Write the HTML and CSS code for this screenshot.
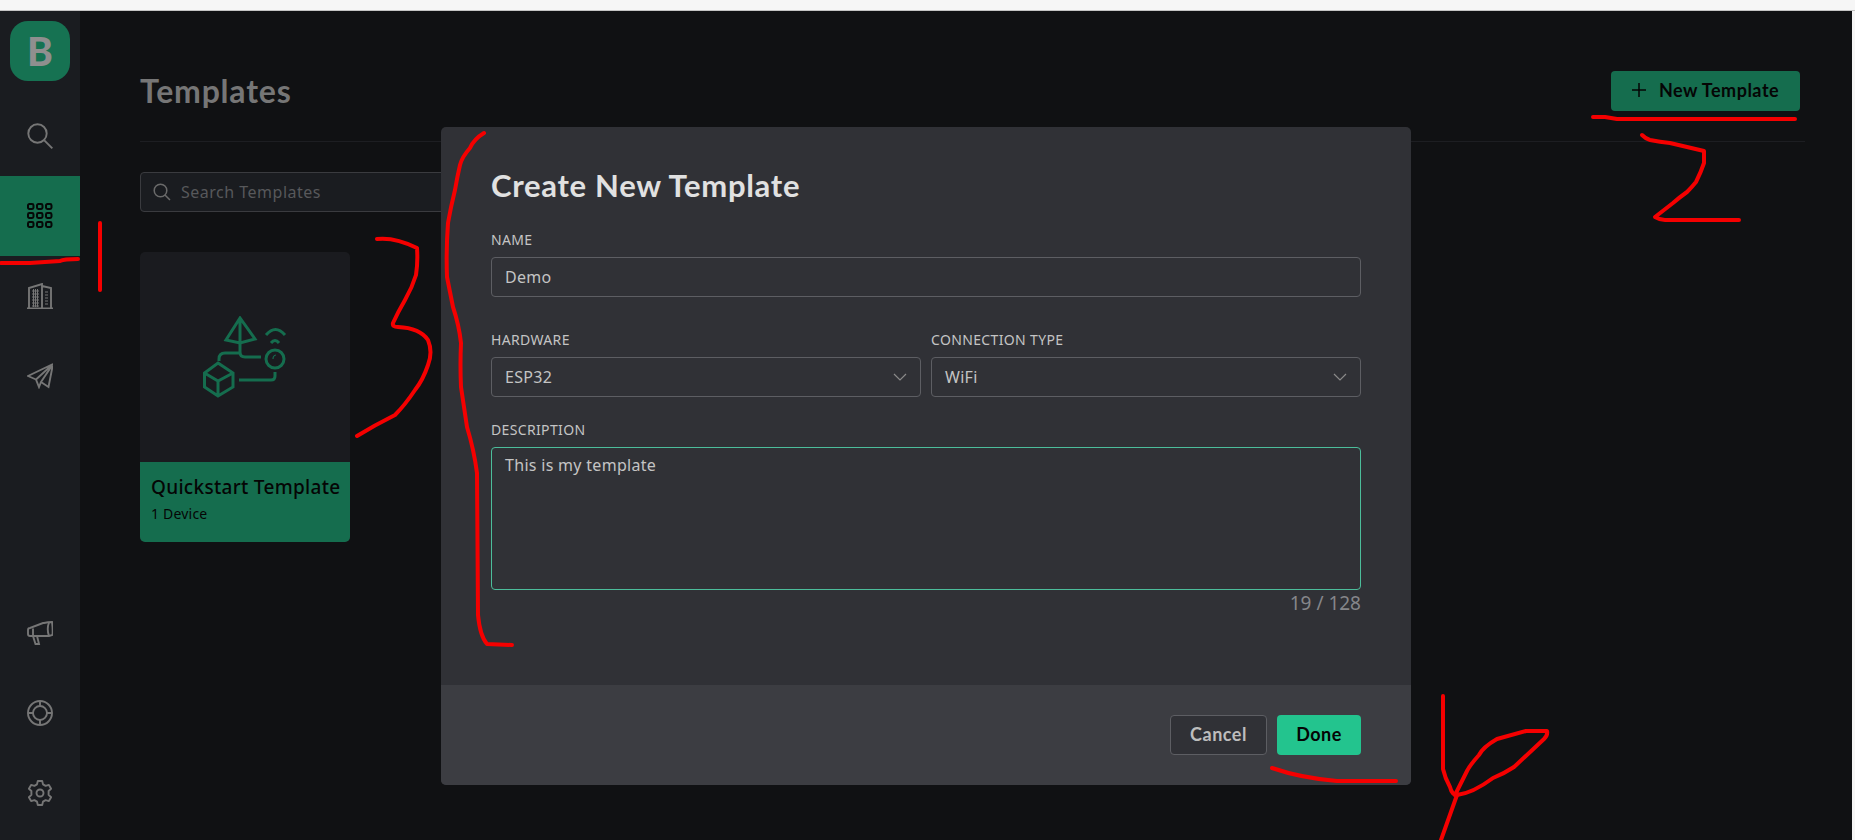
FILE: index.html
```html
<!DOCTYPE html>
<html lang="en">

<head>
  <meta charset="UTF-8">
  <title>Templates</title>
  <link rel="stylesheet" href="styles.css">
</head>

<body>
  <div class="topStrip"></div>
  <div class="app">
    <aside class="sidebar">
      <div class="logo">B</div>
      <div class="navItem navSearch">
        <svg class="navIcon" viewBox="0 0 26 26"><circle cx="10.500" cy="10.500" r="9.200"/><path d="M17.300 17.300 L25.300 25.300"/></svg>
      </div>
      <div class="navItem navActive">
        <svg class="navIcon" viewBox="0 0 26 26">
          <rect x="1" y="1" width="5.500" height="5" rx="1.400"/><rect x="10" y="1" width="5.500" height="5" rx="1.400"/><rect x="19" y="1" width="5.500" height="5" rx="1.400"/>
          <rect x="1" y="10" width="5.500" height="5" rx="1.400"/><rect x="10" y="10" width="5.500" height="5" rx="1.400"/><rect x="19" y="10" width="5.500" height="5" rx="1.400"/>
          <rect x="1" y="19" width="5.500" height="5" rx="1.400"/><rect x="10" y="19" width="5.500" height="5" rx="1.400"/><rect x="19" y="19" width="5.500" height="5" rx="1.400"/>
        </svg>
      </div>
      <div class="navItem">
        <svg class="navIcon" viewBox="0 0 26 26">
          <path d="M0 25.500 H26 M2 25 V5 L15 1 V25 M15 3 L24 5 V25"/>
          <path class="thin" d="M5 8 H12 M5 11 H12 M5 14 H12 M5 17 H12 M5 20 H12 M5 23 H12 M6.500 6 V24 M8.500 6 V24 M10.500 6 V24 M18 9 H21 M18 12 H21 M18 15 H21 M18 18 H21 M18 21 H21"/>
        </svg>
      </div>
      <div class="navItem">
        <svg class="navIcon" viewBox="0 0 26 26"><path d="M26 1 L1 13 L9 16.500 Z M26 1 L21.500 24 L14 19 Z M26 1 L9 16.500 L12 24 L14 19"/></svg>
      </div>
      <div class="navBottom">
        <div class="navItem">
          <svg class="navIcon" viewBox="0 0 26 24"><path d="M1 9 Q1 7 3 7 L16 2 L17 2 Q21 1 25 1 Q26 8 25.500 14 L22 15 L10 15 L3 15 Q1 15 1 13 Z"/><path d="M6 7.500 V14.500 M22 1.500 Q19.500 8 22 15"/><path d="M6 15 L8.500 23 H12 L10 15"/></svg>
        </div>
        <div class="navItem">
          <svg class="navIcon" viewBox="0 0 26 26"><circle cx="13" cy="13" r="12"/><circle cx="13" cy="13" r="7"/><path d="M13 1.500 V6 M13 20 V24.500 M1.500 13 H6 M20 13 H24.500"/></svg>
        </div>
        <div class="navItem">
          <svg class="navIcon gear" viewBox="0 0 26 26"><path d="M10.800 1 H15.200 L16 4.400 L18.600 5.900 L21.900 4.900 L24.100 8.700 L21.600 11 V14.900 L24.100 17.300 L21.900 21.100 L18.600 20.100 L16 21.600 L15.200 25 H10.800 L10 21.600 L7.400 20.100 L4.100 21.100 L1.900 17.300 L4.400 14.900 V11 L1.900 8.700 L4.100 4.900 L7.400 5.900 L10 4.400 Z"/><circle cx="13" cy="13" r="3.500"/></svg>
        </div>
      </div>
    </aside>

    <main class="content">
      <header class="pageHeader">
        <h1>Templates</h1>
        <button class="newBtn">
          <svg viewBox="0 0 14 14"><path d="M7 0 V14 M0 7 H14"/></svg>
          New Template
        </button>
      </header>
      <div class="searchBox">
        <svg viewBox="0 0 18 18"><circle cx="7.500" cy="7.500" r="6.300"/><path d="M12 12 L17 17"/></svg>
        <span>Search Templates</span>
      </div>
      <div class="card">
        <div class="cardPic">
          <svg viewBox="0 0 84 82">
            <path d="M37 2 L23 24 L37 27 L52 23 Z M37 2 V27"/>
            <path d="M37 28 V36 Q37 41 42 41 H58 M37 37 H22 Q16 37 16 43 V45"/>
            <circle cx="72" cy="43" r="9"/>
            <path class="thin" d="M70 43 Q70 39.500 73 39"/>
            <path d="M63 19 Q72.500 8 82 19 M68 27 Q72 22 76 27"/>
            <path d="M15 47 L30 57 V71 L15 80 L1.500 71 V57 Z M1.500 57 L15 65 L30 57 M15 65 V80"/>
            <path d="M36 64 H68 Q72 64 72 60 V56"/>
          </svg>
        </div>
        <div class="cardInfo">
          <div class="cardTitle">Quickstart Template</div>
          <div class="cardSub">1 Device</div>
        </div>
      </div>
    </main>
  </div>

  <div class="modal">
    <div class="modalBody">
      <h2>Create New Template</h2>
      <label class="fieldLabel">NAME</label>
      <div class="field">Demo</div>
      <div class="twoCols">
        <div>
          <label class="fieldLabel">HARDWARE</label>
          <div class="field select">ESP32<svg viewBox="0 0 14 8"><path d="M1 1 L7 7 L13 1"/></svg></div>
        </div>
        <div>
          <label class="fieldLabel">CONNECTION TYPE</label>
          <div class="field select">WiFi<svg viewBox="0 0 14 8"><path d="M1 1 L7 7 L13 1"/></svg></div>
        </div>
      </div>
      <label class="fieldLabel descLabel">DESCRIPTION</label>
      <div class="field textarea">This is my template</div>
      <div class="counter">19 / 128</div>
    </div>
    <div class="modalFooter">
      <button class="cancelBtn">Cancel</button>
      <button class="doneBtn">Done</button>
    </div>
  </div>

  <!-- красные пометки поверх скриншота -->
  <svg class="marks" viewBox="0 0 1855 840">
    <path d="M1 263 H30 L60 261 Q64 259 78 259"/>
    <path d="M100 223 V290"/>
    <path d="M377 239 Q395 237 417 248 Q418 262 416 275 Q412 288 405 300 Q398 312 393 323 Q392 327 398 327 Q420 328 428 340 Q433 352 428 365 Q423 380 415 390 Q405 405 395 415 Q375 425 357 436"/>
    <path d="M484 133 Q474 139 470 148 Q462 157 460 165 Q457 178 455 190 Q451 206 448 223 Q446 250 447 277 Q450 292 453 307 Q459 325 461 343 Q460 365 461 387 Q464 407 467 427 Q474 450 477 473 L478 615 Q480 636 487 644 L512 645"/>
    <path d="M1593 117 H1605 L1617 119 H1795"/>
    <path d="M1642 135 Q1646 139 1650 140 Q1660 142 1670 143 L1704 151 V163 Q1701 172 1696 182 Q1692 187 1687 192 Q1680 197 1673 203 L1655 217 Q1660 220 1665 220 H1739"/>
    <path d="M1272 768 Q1301 778 1337 781 H1396"/>
    <path d="M1443 696 V769 Q1445 778 1450 787 Q1452 795 1457 795 L1441 840"/>
    <path d="M1457 795 Q1473 793 1493 778 Q1505 773 1514 767 L1544 739 Q1548 735 1547 731 H1526 L1497 739 Q1483 747 1479 755 Q1470 765 1467 771 L1455 795"/>
  </svg>
</body>

</html>
```

FILE: styles.css
```css
* {
  box-sizing: border-box;
}

html,
body {
  margin: 0;
  height: 840px;
  overflow: hidden;
}

body {
  position: relative;
  display: flex;
  flex-direction: column;
  background-color: #f6f6f6;
  font-family: "Noto Sans", sans-serif;
}

.topStrip {
  height: 11px;
  flex: none;
  background-color: #f6f6f6;
  border-bottom: 1px solid #c4c4c4;
}

.app {
  flex: 1;
  display: flex;
  margin-right: 3px;
  background-color: #101113;
}

.sidebar {
  width: 80px;
  flex: none;
  display: flex;
  flex-direction: column;
  padding-top: 10px;
  background-color: #1a1c20;
}

.logo {
  width: 60px;
  height: 60px;
  margin-left: 10px;
  display: flex;
  align-items: center;
  justify-content: center;
  border-radius: 18px;
  background-color: #167252;
  color: #8f8f8f;
  font-family: "Lato", sans-serif;
  font-size: 39px;
  font-weight: 900;
}

.navItem {
  height: 80px;
  display: flex;
  align-items: center;
  justify-content: center;
}

.navSearch {
  margin-top: 15px;
}

.navActive {
  background-color: #156d4e;
}

.navIcon {
  width: 26px;
  height: 26px;
  fill: none;
  stroke: #767676;
  stroke-width: 1.900;
}

.navIcon .thin {
  stroke-width: 1;
}

.navActive .navIcon {
  stroke: #060807;
  stroke-width: 2;
}

.gear {
  stroke-linejoin: round;
}

.navBottom {
  margin-top: auto;
  padding-bottom: 7px;
}

.content {
  flex: 1;
  padding: 0 47px 0 60px;
}

.pageHeader {
  height: 131px;
  display: flex;
  align-items: center;
  justify-content: space-between;
  padding: 60px 5px 30px 0;
  margin-bottom: 30px;
  border-bottom: 1px solid #1d1e22;
}

.pageHeader h1 {
  margin: -2px 0 0;
  color: #767676;
  font-family: "Lato", sans-serif;
  font-size: 32px;
  font-weight: 700;
  letter-spacing: 0.800px;
}

.newBtn {
  width: 189px;
  height: 40px;
  display: flex;
  align-items: center;
  justify-content: center;
  padding: 0 0 2px;
  border: none;
  border-radius: 4px;
  background-color: #156d4e;
  color: #050505;
  font-family: "Lato", sans-serif;
  font-size: 18px;
  font-weight: 700;
  letter-spacing: 0.500px;
}

.newBtn svg {
  width: 14px;
  height: 14px;
  margin-right: 13px;
  fill: none;
  stroke: #050505;
  stroke-width: 1.500;
}

.searchBox {
  width: 420px;
  height: 40px;
  display: flex;
  align-items: center;
  padding-left: 12px;
  border: 1px solid #3a3b3f;
  border-radius: 4px;
  background-color: #1a1c20;
  color: #57585b;
  font-size: 16px;
  letter-spacing: 0.500px;
}

.searchBox svg {
  width: 18px;
  height: 18px;
  margin-right: 10px;
  fill: none;
  stroke: #6a6a6a;
  stroke-width: 1.500;
}

.card {
  width: 210px;
  height: 290px;
  margin-top: 40px;
  border-radius: 5px;
  overflow: hidden;
  background-color: #1a1b1f;
}

.cardPic {
  height: 210px;
  display: flex;
  align-items: center;
  justify-content: center;
}

.cardPic svg {
  width: 84px;
  height: 82px;
  fill: none;
  stroke: #156d4e;
  stroke-width: 3;
}

.cardPic .thin {
  stroke-width: 1.200;
}

.cardInfo {
  height: 80px;
  padding: 12px 11px;
  background-color: #156d4e;
  color: #050505;
}

.cardTitle {
  font-size: 19px;
  font-weight: 500;
  letter-spacing: 0.300px;
  white-space: nowrap;
}

.cardSub {
  margin-top: 4px;
  font-size: 14px;
  letter-spacing: 0.200px;
}

.modal {
  position: absolute;
  left: 441px;
  top: 127px;
  width: 970px;
  height: 658px;
  display: flex;
  flex-direction: column;
  border-radius: 5px;
  overflow: hidden;
  background-color: #303136;
  color: #c9c9c9;
}

.modalBody {
  flex: 1;
  padding: 38px 50px 0;
}

.modalBody h2 {
  margin: 0 0 25px;
  color: #e1e1e1;
  font-family: "Lato", sans-serif;
  font-size: 31px;
  font-weight: 700;
  line-height: 40px;
  letter-spacing: 0.700px;
}

.fieldLabel {
  display: block;
  height: 20px;
  margin-bottom: 7px;
  color: #c4c4c4;
  font-size: 14px;
  line-height: 20px;
  letter-spacing: 0.350px;
}

.field {
  height: 40px;
  display: flex;
  align-items: center;
  justify-content: space-between;
  padding: 0 13px;
  border: 1px solid #5d5e63;
  border-radius: 4px;
  color: #c4c4c4;
  font-size: 16px;
  letter-spacing: 0.300px;
}

.twoCols {
  display: grid;
  grid-template-columns: 430px 430px;
  gap: 10px;
  margin-top: 33px;
}

.select svg {
  width: 14px;
  height: 8px;
  fill: none;
  stroke: #8a8a8a;
  stroke-width: 1.200;
}

.descLabel {
  margin-top: 23px;
}

.textarea {
  height: 143px;
  align-items: flex-start;
  padding-top: 6px;
  border-color: #4cbd9b;
}

.counter {
  text-align: right;
  color: #85868a;
  font-size: 19px;
}

.modalFooter {
  height: 100px;
  flex: none;
  display: flex;
  justify-content: flex-end;
  align-items: flex-start;
  gap: 10px;
  padding: 30px 50px 0;
  background-color: #3c3d42;
}

.cancelBtn,
.doneBtn {
  height: 40px;
  padding: 0 0 2px;
  border-radius: 4px;
  font-family: "Lato", sans-serif;
  font-size: 18px;
  font-weight: 700;
  letter-spacing: 0.500px;
}

.cancelBtn {
  width: 97px;
  border: 1px solid #5d5e63;
  background-color: #303136;
  color: #bdbdbd;
}

.doneBtn {
  width: 84px;
  border: none;
  background-color: #23c48e;
  color: #050505;
}

.marks {
  position: absolute;
  left: 0;
  top: 0;
  width: 1855px;
  height: 840px;
  fill: none;
  stroke: #f50000;
  stroke-width: 4;
  stroke-linecap: round;
  stroke-linejoin: round;
  pointer-events: none;
}
```
